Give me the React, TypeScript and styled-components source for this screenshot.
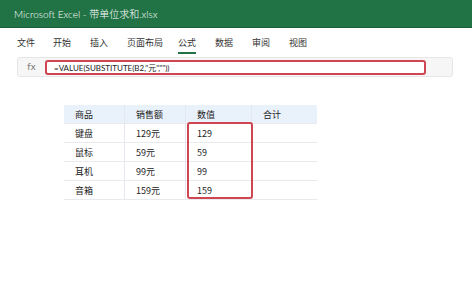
import React from "react";
import styled, { createGlobalStyle } from "styled-components";

const Global = createGlobalStyle`
  html, body { margin: 0; padding: 0; background: #fff; }
  body { font-family: "Lato", "Noto Sans CJK SC", sans-serif; width: 472px; height: 288px; overflow: hidden; }
`;

const Page = styled.div`
  width: 472px;
  height: 288px;
  display: flex;
  flex-direction: column;
  background: #fff;
`;

const TitleBar = styled.div`
  height: 27px;
  background: #217346;
  border-bottom: 1px solid #1a5c38;
  display: flex;
  align-items: center;
  padding-left: 14px;
  color: #fff;
  font-size: 10px;
  font-weight: 300;
  font-family: "Lato", "Noto Sans CJK SC", sans-serif;
`;

const Tabs = styled.div`
  display: flex;
  height: 29px;
  padding-left: 17px;
`;

const Tab = styled.div<{ $active?: boolean; $w: number }>`
  width: ${(p) => p.$w}px;
  display: flex;
  flex-direction: column;
  align-items: flex-start;
  padding-top: 9px;
  font-size: 9px;
  color: #333;
  font-family: "Noto Sans CJK SC", sans-serif;
  span {
    display: inline-block;
    line-height: 12px;
    padding-bottom: 3px;
    border-bottom: 2px solid ${(p) => (p.$active ? "#217346" : "transparent")};
  }
`;

const FormulaBar = styled.div`
  margin-left: 17px;
  width: 436px;
  height: 20px;
  background: #f6f6f6;
  border: 1px solid #e6e6e6;
  border-radius: 3px;
  display: flex;
  align-items: center;
  box-sizing: border-box;
`;

const Fx = styled.div`
  width: 27px;
  text-align: center;
  font-size: 9px;
  color: #777;
  font-family: "DejaVu Sans", sans-serif;
`;

const FormulaInput = styled.div`
  width: 381px;
  height: 15px;
  box-sizing: border-box;
  background: #fff;
  border: 2px solid #cf4551;
  border-radius: 3px;
  display: flex;
  align-items: center;
  padding-left: 7px;
  font-size: 8px;
  color: #222;
  font-family: "Lato", "Noto Sans CJK SC", sans-serif;
`;

const TableArea = styled.div`
  padding: 28px 0 0 64px;
`;

const TableWrap = styled.div`
  position: relative;
  width: 253px;
`;

const Grid = styled.div`
  display: grid;
  grid-template-columns: 61px 61px 66px 65px;
`;

const Cell = styled.div<{ $head?: boolean; $last?: boolean }>`
  height: ${(p) => (p.$head ? 19 : 19)}px;
  box-sizing: border-box;
  display: flex;
  align-items: center;
  padding-left: 11px;
  padding-top: 1px;
  font-size: 9px;
  color: #222;
  font-family: "Noto Sans CJK SC", sans-serif;
  background: ${(p) => (p.$head ? "#e9f1fb" : "#fff")};
  border-right: ${(p) => (p.$last ? "none" : "1px solid #e4e8ee")};
  border-bottom: 1px solid #e8eaee;
`;

const Highlight = styled.div`
  position: absolute;
  left: 123px;
  top: 17px;
  width: 66px;
  height: 77px;
  box-sizing: border-box;
  border: 2px solid #cf4551;
  border-radius: 3px;
`;

const head = ["商品", "销售额", "数值", "合计"];
const rows = [
  ["键盘", "129元", "129", ""],
  ["鼠标", "59元", "59", ""],
  ["耳机", "99元", "99", ""],
  ["音箱", "159元", "159", ""],
];

const tabs: [string, number][] = [
  ["文件", 36],
  ["开始", 37],
  ["插入", 37],
  ["页面布局", 51],
  ["公式", 37],
  ["数据", 37],
  ["审阅", 37],
  ["视图", 37],
];

export default function App() {
  return (
    <Page>
      <Global />
      <TitleBar>Microsoft Excel - 带单位求和.xlsx</TitleBar>
      <Tabs>
        {tabs.map(([t, w]) => (
          <Tab key={t} $w={w} $active={t === "公式"}>
            <span>{t}</span>
          </Tab>
        ))}
      </Tabs>
      <FormulaBar>
        <Fx>fx</Fx>
        <FormulaInput>=VALUE(SUBSTITUTE(B2,"元",""))</FormulaInput>
      </FormulaBar>
      <TableArea>
        <TableWrap>
          <Grid>
            {head.map((h, i) => (
              <Cell key={h} $head $last={i === 3}>
                {h}
              </Cell>
            ))}
            {rows.map((r, ri) =>
              r.map((c, ci) => (
                <Cell key={`${ri}-${ci}`} $last={ci === 3}>
                  {c}
                </Cell>
              ))
            )}
          </Grid>
          <Highlight />
        </TableWrap>
      </TableArea>
    </Page>
  );
}
